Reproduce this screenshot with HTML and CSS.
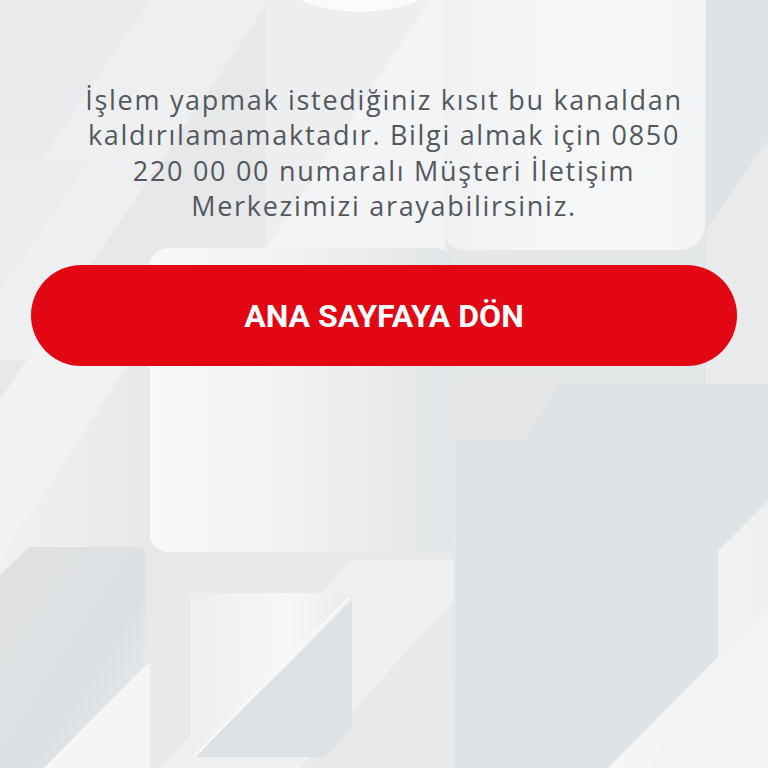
FILE: index.html
```html
<!DOCTYPE html>
<html lang="tr">
<head>
<meta charset="utf-8">
<title>Bilgi</title>
<link rel="stylesheet" href="styles.css">
</head>
<body>
<div class="page">
  <svg class="bg" viewBox="0 0 768 768" preserveAspectRatio="none" aria-hidden="true">
    <defs>
      <linearGradient id="gBase" x1="0" y1="0" x2="1" y2="1">
        <stop offset="0" stop-color="#e9ebec"/>
        <stop offset="1" stop-color="#e1e4e6"/>
      </linearGradient>
      <linearGradient id="gTR" x1="0" y1="0" x2="1" y2="0">
        <stop offset="0" stop-color="#f0f1f2"/>
        <stop offset="0.5" stop-color="#f6f7f8"/>
        <stop offset="1" stop-color="#f4f5f6"/>
      </linearGradient>
      <linearGradient id="gMid" x1="0" y1="0" x2="1" y2="0">
        <stop offset="0" stop-color="#f7f8f9"/>
        <stop offset="0.45" stop-color="#f1f2f3"/>
        <stop offset="1" stop-color="#e2e5e7"/>
      </linearGradient>
      <linearGradient id="gBL" x1="0" y1="0" x2="1" y2="1">
        <stop offset="0" stop-color="#dfe1e3"/>
        <stop offset="0.6" stop-color="#dde0e2"/>
        <stop offset="1" stop-color="#eceef0"/>
      </linearGradient>
      <linearGradient id="gBM" x1="0" y1="0" x2="1" y2="0">
        <stop offset="0" stop-color="#eceef0"/>
        <stop offset="0.6" stop-color="#f6f7f8"/>
        <stop offset="1" stop-color="#e9ebed"/>
      </linearGradient>
      <linearGradient id="gLight" x1="0" y1="0" x2="1" y2="0">
        <stop offset="0" stop-color="#f5f6f7"/>
        <stop offset="1" stop-color="#eef0f1"/>
      </linearGradient>
      <linearGradient id="gLeft" x1="0" y1="0" x2="1" y2="0">
        <stop offset="0" stop-color="#f0f1f2"/>
        <stop offset="1" stop-color="#e6e8ea"/>
      </linearGradient>
    </defs>
    <rect x="0" y="0" width="768" height="768" fill="url(#gBase)"/>
    <!-- top-left diagonal bands -->
    <polygon points="0,0 150,0 0,220" fill="#e8eaeb"/>
    <polygon points="150,0 270,0 0,400 0,220" fill="#eeeff0"/>
    <polygon points="0,400 270,0 290,0 290,250 150,250 150,360 0,360" fill="#e6e8e9"/>
    <polygon points="0,160 90,160 0,290" fill="#eceeef"/>
    <polygon points="0,400 60,310 150,310 150,360 0,560" fill="#f1f2f3"/>
    <!-- top-right big rounded card -->
    <rect x="440" y="-40" width="265" height="290" rx="26" fill="url(#gTR)"/>
    <rect x="706" y="0" width="62" height="420" fill="#e0e3e5"/>
    <polygon points="706,230 768,140 768,420 706,520" fill="#e8eaeb"/>
    <!-- upper middle panel -->
    <rect x="265" y="-10" width="180" height="260" fill="#eceeef"/>
    <polygon points="265,250 430,0 445,0 445,250" fill="#f3f4f5"/>
    <!-- white circle at top -->
    <circle cx="360" cy="-144" r="156" fill="#fafbfb"/>
    <!-- middle rounded square -->
    <rect x="149" y="248" width="305" height="304" rx="20" fill="url(#gMid)"/>
    <!-- right region -->
    <polygon points="456,384 768,384 768,500 718,551 718,657 608,768 456,768" fill="#e0e3e5"/>
    <polygon points="454,380 560,380 454,560" fill="#e4e6e8"/>
    <rect x="456" y="440" width="240" height="150" rx="6" fill="#dfe2e4"/>
    <polygon points="718,551 768,501 768,768 608,768 718,657" fill="url(#gLight)"/>
    <polygon points="718,657 768,610 768,768 650,768" fill="#f2f3f4"/>
    <!-- left lower -->
    <polygon points="0,560 150,330 150,768 0,768" fill="url(#gLeft)"/>
    <path d="M29,547 L139,547 Q145,547 145,553 L145,666 L44,768 L0,768 L0,575 Z" fill="url(#gBL)"/>
    <polygon points="44,768 145,666 190,640 190,768" fill="#f4f5f6"/>
    <!-- bottom middle square -->
    <polygon points="150,552 454,552 454,768 190,768 150,768" fill="#e7e9eb"/>
    <polygon points="160,768 352,560 454,560 454,600 300,768" fill="#eef0f1"/>
    <path d="M195,593 L346,593 Q352,593 352,599 L352,727 L326,757 L198,757 Q190,757 190,749 L190,599 Q190,593 195,593 Z" fill="url(#gBM)"/>
    <polygon points="352,600 352,727 326,757 194,757" fill="#dfe2e4"/>
    <line x1="350" y1="597" x2="194" y2="757" stroke="#f9fafa" stroke-width="2"/>
  </svg>

  <main class="content">
    <p class="message">İşlem yapmak istediğiniz kısıt bu kanaldan<br>kaldırılamamaktadır. Bilgi almak için 0850<br>220 00 00 numaralı Müşteri İletişim<br>Merkezimizi arayabilirsiniz.</p>
    <button class="home-btn" type="button">ANA SAYFAYA DÖN</button>
  </main>
</div>
</body>
</html>
```

FILE: styles.css
```css
html, body {
  margin: 0;
  padding: 0;
}

body {
  font-family: "Open Sans", "Noto Sans", "DejaVu Sans", sans-serif;
  background: #e6e8ea;
}

.page {
  position: relative;
  width: 768px;
  height: 768px;
  overflow: hidden;
}

.bg {
  position: absolute;
  left: 0;
  top: 0;
  width: 768px;
  height: 768px;
  z-index: 0;
}

.content {
  position: relative;
  z-index: 1;
  display: flex;
  flex-direction: column;
  align-items: center;
  padding: 82px 20px 0;
  gap: 42px;
}

.message {
  margin: 0;
  font-size: 27px;
  line-height: 35.3px;
  font-weight: 400;
  letter-spacing: 1.7px;
  color: #53585d;
  text-align: center;
  white-space: nowrap;
}

.home-btn {
  width: 706px;
  height: 101px;
  border: none;
  border-radius: 51px;
  background: #e30613;
  color: #ffffff;
  font-family: Roboto, "Liberation Sans", sans-serif;
  font-weight: 700;
  font-size: 32px;
  padding: 0;
  cursor: pointer;
}
```
